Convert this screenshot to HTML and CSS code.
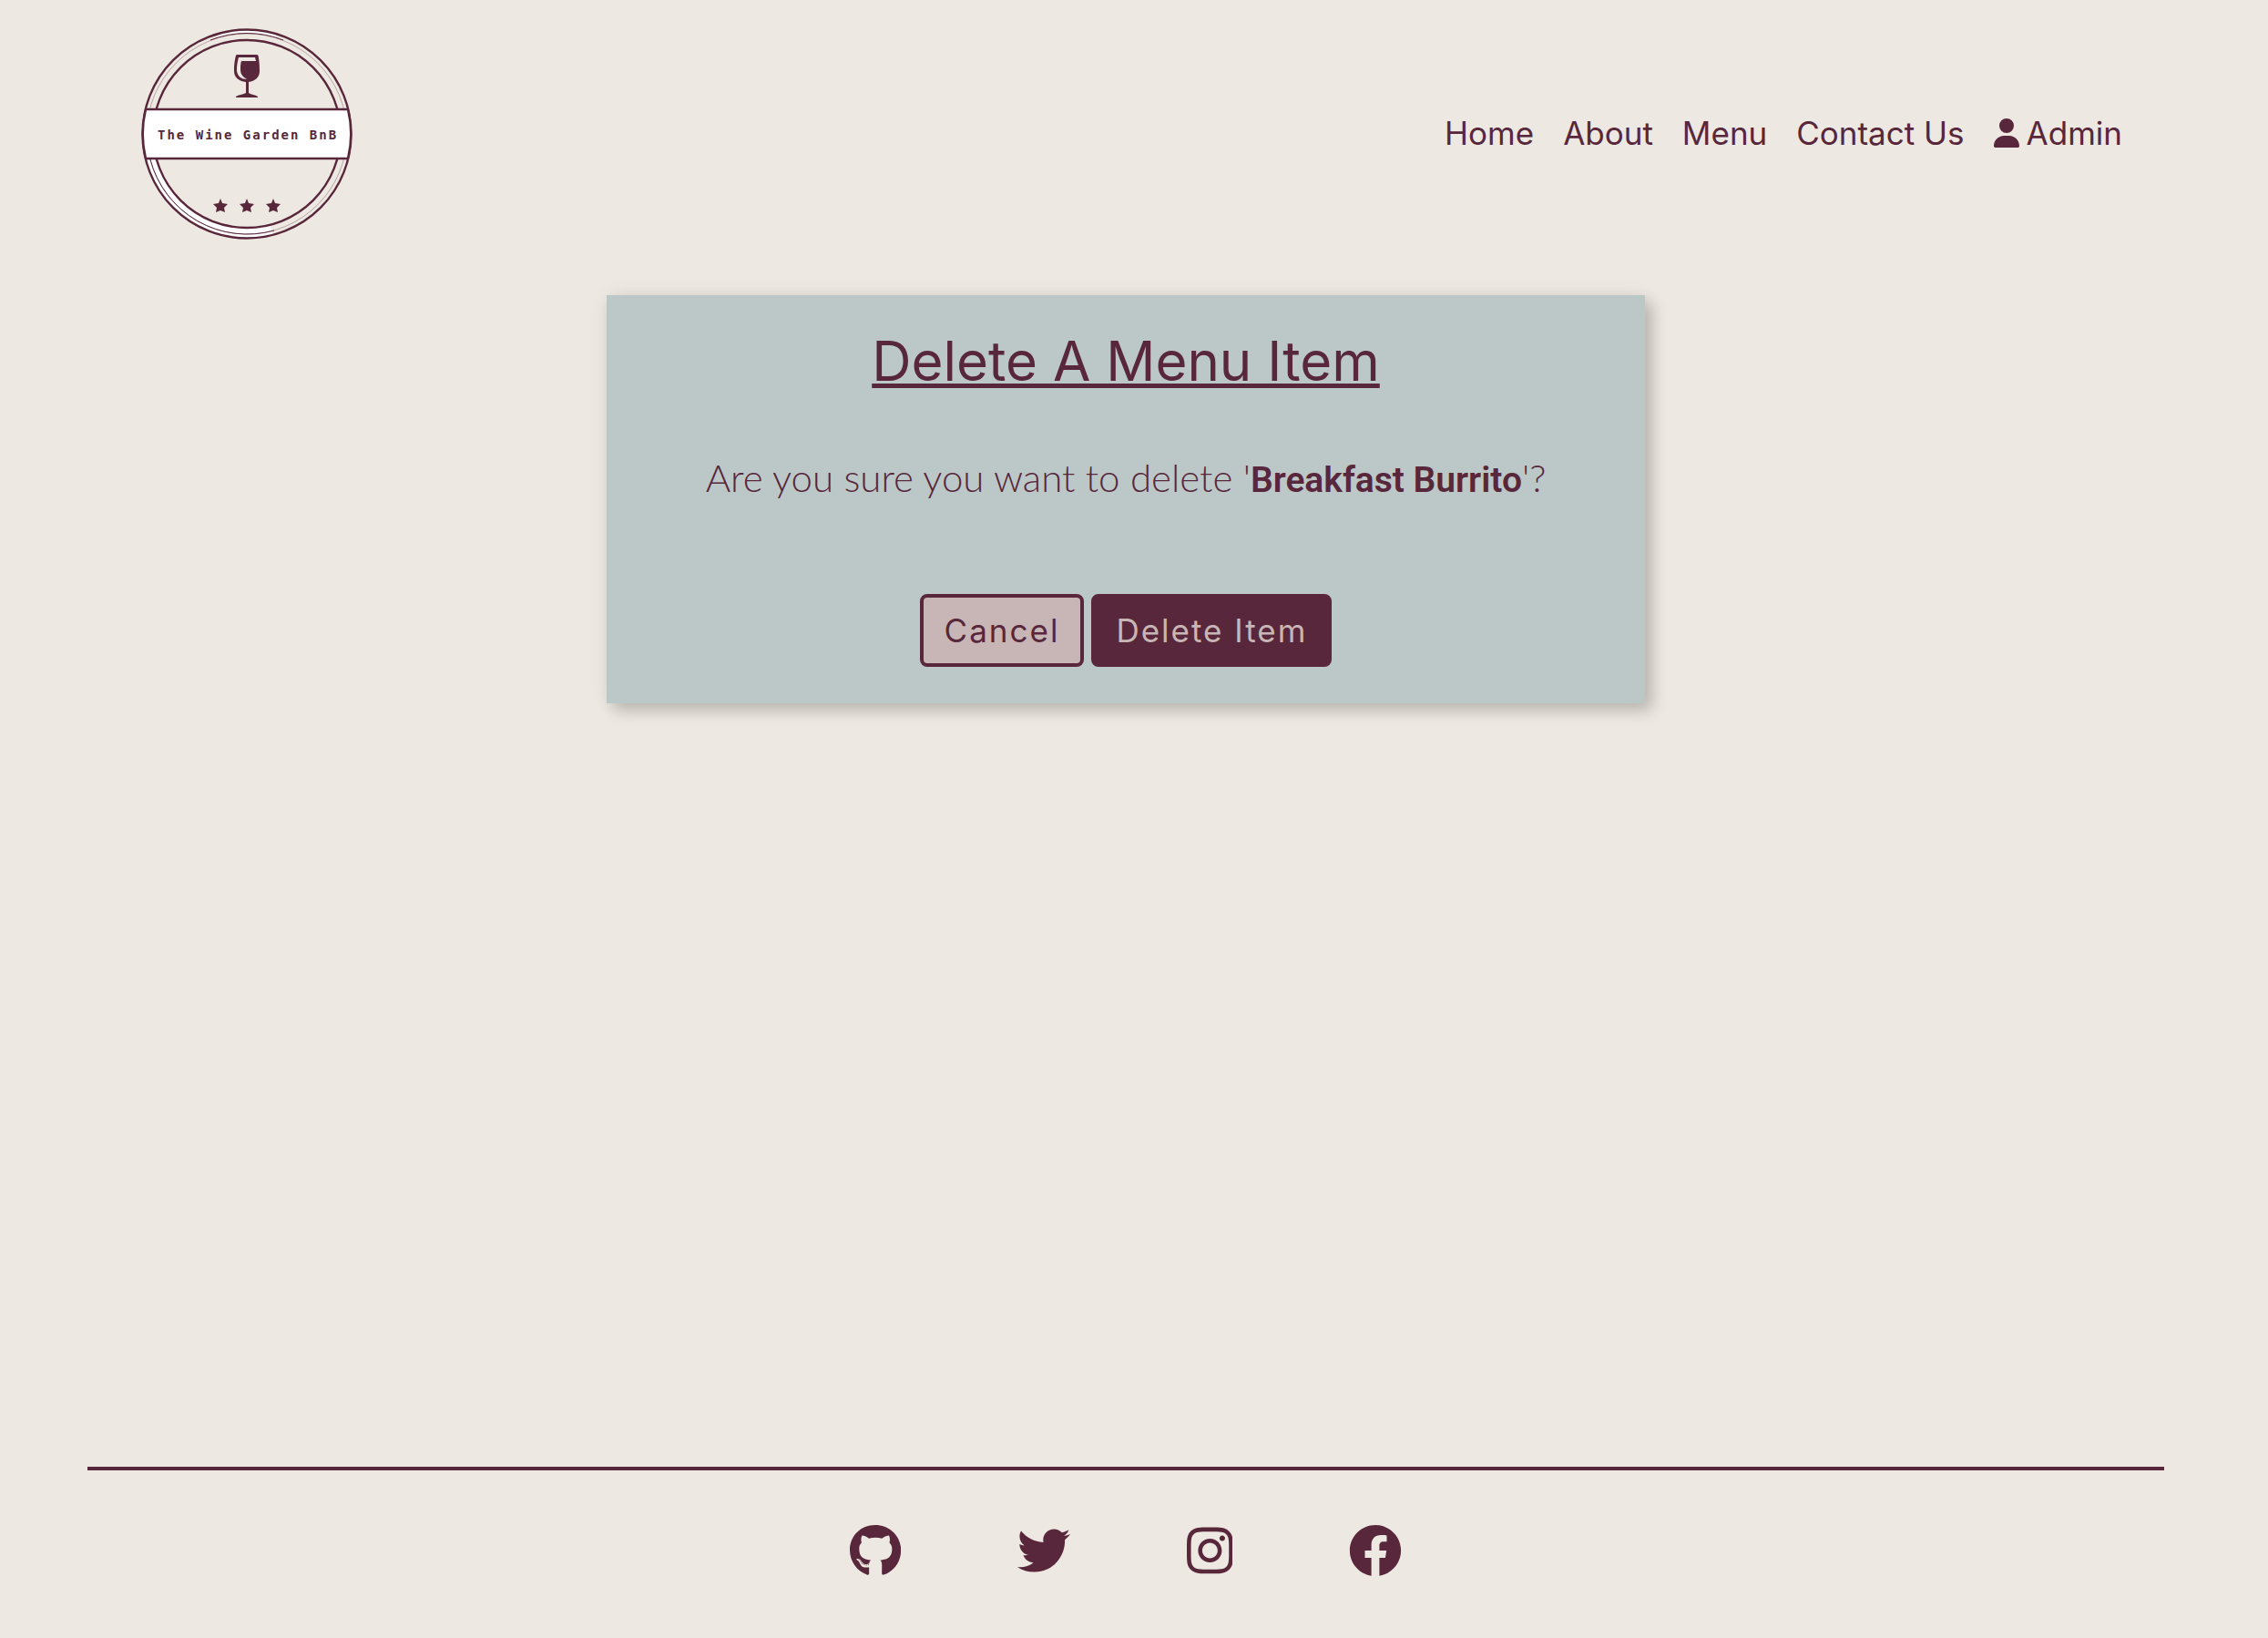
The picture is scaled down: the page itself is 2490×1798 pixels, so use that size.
FILE: index.html
```html
<!DOCTYPE html>
<html lang="en">
<head>
<meta charset="utf-8">
<meta name="viewport" content="width=device-width, initial-scale=1">
<title>The Wine Garden BnB</title>
<link rel="stylesheet" href="styles.css">
</head>
<body>
<header class="header">
  <a class="logo" href="#" aria-label="The Wine Garden BnB">
    <svg viewBox="0 0 232 232">
      <!-- pale highlights between the rings -->
      <path class="logo-shine" d="M84 8A112 112 0 0 1 148 8"/>
      <path class="logo-shine logo-shine-wide" d="M11 144A109 109 0 0 0 143 222"/>
      <circle class="ring" cx="116" cy="116" r="114.500"/>
      <circle class="ring" cx="116" cy="116" r="103"/>
      <circle class="ring ring-faint" cx="116" cy="116" r="110"/>
      <path class="ring ring-thin" d="M10 144A110 110 0 0 0 146 222"/>
      <path class="ring ring-thin" d="M76 13A110 110 0 0 1 156 13"/>
      <!-- name band -->
      <path class="band" d="M5 89H227A115 115 0 0 1 227 143H5A115 115 0 0 1 5 89Z"/>
      <text class="logo-name" x="18" y="122">The Wine Garden BnB</text>
      <!-- glass -->
      <path class="ink" fill-rule="evenodd" d="M105 29H127Q128 29 128.500 30C130 37 130 44 130 47C130 54 125 58 118 59V71C121 73 125 73 128 75V76H104V75C107 73 111 73 115 71V59C107 58 102 54 102 47C102 44 102 37 104 30Q104.500 29 105 29ZM107 32C105 39 105 44 105 47C106 53 110 56 116 56C111 53 109 50 109 45C109 42 109 39 110 36H126L125 32Z"/>
      <!-- stars -->
      <path id="star" class="ink" d="M87 187L89 192L95 193L91 197L92 202L87 200L82 202L83 197L79 193L85 192Z"/>
      <use href="#star" x="29"/>
      <use href="#star" x="58"/>
    </svg>
  </a>
  <nav class="nav">
    <a href="#">Home</a>
    <a href="#">About</a>
    <a href="#">Menu</a>
    <a href="#">Contact Us</a>
    <a class="nav-user" href="#"><svg viewBox="0 0 448 512"><path d="M224 256A128 128 0 1 0 224 0a128 128 0 1 0 0 256zm-45.700 48C79.800 304 0 383.800 0 482.300C0 498.700 13.300 512 29.700 512H418.300c16.400 0 29.700-13.300 29.700-29.700C448 383.800 368.200 304 269.700 304H178.300z"/></svg>Admin</a>
  </nav>
</header>
<main class="main">
  <form class="card">
    <h1>Delete A Menu Item</h1>
    <p>Are you sure you want to delete '<strong>Breakfast Burrito</strong>'?</p>
    <div class="actions">
      <button class="btn btn-cancel" type="button">Cancel</button>
      <button class="btn btn-delete" type="submit">Delete Item</button>
    </div>
  </form>
</main>
<footer class="footer">
  <a href="#" aria-label="GitHub"><svg viewBox="0 0 496 512"><path d="M165.900 397.400c0 2-2.300 3.600-5.200 3.600-3.300.3-5.600-1.300-5.600-3.600 0-2 2.300-3.600 5.200-3.600 3-.3 5.600 1.300 5.600 3.600zm-31.100-4.500c-.7 2 1.300 4.300 4.300 4.900 2.600 1 5.600 0 6.200-2s-1.300-4.300-4.300-5.200c-2.600-.7-5.500.3-6.200 2.300zm44.200-1.700c-2.900.7-4.900 2.600-4.600 4.900.3 2 2.900 3.300 5.900 2.600 2.900-.7 4.900-2.600 4.600-4.600-.3-1.900-3-3.200-5.900-2.900zM244.800 8C106.100 8 0 113.300 0 252c0 110.900 69.800 205.800 169.500 239.200 12.800 2.300 17.300-5.600 17.300-12.100 0-6.200-.3-40.400-.3-61.400 0 0-70 15-84.700-29.800 0 0-11.400-29.100-27.800-36.600 0 0-22.900-15.700 1.600-15.400 0 0 24.900 2 38.600 25.800 21.900 38.600 58.600 27.500 72.900 20.900 2.300-16 8.800-27.100 16-33.700-55.900-6.200-112.300-14.300-112.300-110.500 0-27.500 7.600-41.300 23.600-58.900-2.600-6.500-11.100-33.300 2.600-67.900 20.900-6.500 69 27 69 27 20-5.600 41.500-8.500 62.800-8.500s42.800 2.900 62.800 8.500c0 0 48.100-33.600 69-27 13.700 34.700 5.200 61.400 2.600 67.900 16 17.700 25.800 31.500 25.800 58.900 0 96.500-58.900 104.200-114.800 110.500 9.200 7.900 17 22.900 17 46.400 0 33.700-.3 75.400-.3 83.600 0 6.500 4.600 14.400 17.300 12.100C428.200 457.800 496 362.900 496 252 496 113.300 383.500 8 244.800 8zM97.200 352.900c-1.300 1-1 3.300.7 5.200 1.600 1.600 3.900 2.300 5.200 1 1.300-1 1-3.300-.7-5.200-1.600-1.600-3.900-2.300-5.200-1zm-10.800-8.100c-.7 1.300.3 2.900 2.300 3.900 1.600 1 3.600.7 4.300-.7.7-1.300-.3-2.900-2.300-3.900-2-.6-3.600-.3-4.300.7zm32.400 35.600c-1.600 1.300-1 4.300 1.300 6.200 2.300 2.300 5.200 2.600 6.500 1 1.300-1.300.7-4.300-1.300-6.200-2.200-2.300-5.200-2.600-6.500-1zm-11.400-14.700c-1.600 1-1.600 3.600 0 5.900 1.600 2.300 4.300 3.300 5.600 2.300 1.600-1.300 1.600-3.900 0-6.200-1.400-2.300-4-3.300-5.600-2z"/></svg></a>
  <a href="#" aria-label="Twitter"><svg viewBox="0 0 512 512"><path d="M459.370 151.716c.325 4.548.325 9.097.325 13.645 0 138.720-105.583 298.558-298.558 298.558-59.452 0-114.680-17.219-161.137-47.106 8.447.974 16.568 1.299 25.340 1.299 49.055 0 94.213-16.568 130.274-44.832-46.132-.975-84.792-31.188-98.112-72.772 6.498.974 12.995 1.624 19.818 1.624 9.421 0 18.843-1.300 27.614-3.573-48.081-9.747-84.143-51.980-84.143-102.985v-1.299c13.969 7.797 30.214 12.670 47.431 13.319-28.264-18.843-46.781-51.005-46.781-87.391 0-19.492 5.197-37.360 14.294-52.954 51.655 63.675 129.300 105.258 216.365 109.807-1.624-7.797-2.599-15.918-2.599-24.040 0-57.828 46.782-104.934 104.934-104.934 30.213 0 57.502 12.670 76.670 33.137 23.715-4.548 46.456-13.320 66.599-25.340-7.798 24.366-24.366 44.833-46.132 57.827 21.117-2.273 41.584-8.122 60.426-16.243-14.292 20.791-32.161 39.308-52.628 54.253z"/></svg></a>
  <a href="#" aria-label="Instagram"><svg viewBox="0 0 448 512"><path d="M224.100 141c-63.600 0-114.900 51.300-114.900 114.900s51.300 114.900 114.900 114.900S339 319.500 339 255.900 287.700 141 224.100 141zm0 189.600c-41.100 0-74.700-33.500-74.700-74.700s33.500-74.700 74.700-74.700 74.700 33.500 74.700 74.700-33.600 74.700-74.700 74.700zm146.400-194.300c0 14.900-12 26.800-26.800 26.800-14.900 0-26.800-12-26.800-26.800s12-26.800 26.800-26.800 26.800 12 26.800 26.800zm76.100 27.200c-1.700-35.900-9.900-67.700-36.200-93.900-26.200-26.200-58-34.400-93.900-36.200-37-2.100-147.900-2.100-184.900 0-35.800 1.700-67.600 9.900-93.900 36.100s-34.400 58-36.200 93.900c-2.100 37-2.100 147.900 0 184.900 1.700 35.900 9.900 67.700 36.200 93.900s58 34.400 93.900 36.200c37 2.100 147.900 2.100 184.900 0 35.900-1.700 67.700-9.900 93.900-36.200 26.200-26.200 34.400-58 36.200-93.900 2.100-37 2.100-147.800 0-184.800zM398.800 388c-7.800 19.600-22.900 34.700-42.600 42.600-29.500 11.700-99.500 9-132.100 9s-102.700 2.600-132.100-9c-19.600-7.800-34.700-22.900-42.600-42.600-11.700-29.500-9-99.500-9-132.100s-2.600-102.700 9-132.100c7.800-19.600 22.900-34.700 42.600-42.600 29.500-11.700 99.500-9 132.100-9s102.700-2.600 132.100 9c19.600 7.800 34.700 22.900 42.600 42.600 11.700 29.500 9 99.500 9 132.100s2.700 102.700-9 132.100z"/></svg></a>
  <a href="#" aria-label="Facebook"><svg viewBox="0 0 512 512"><path d="M504 256C504 119 393 8 256 8S8 119 8 256c0 123.780 90.690 226.380 209.250 245V327.690h-63V256h63v-54.640c0-62.150 37-96.480 93.670-96.480 27.140 0 55.520 4.840 55.520 4.840v61h-31.280c-30.800 0-40.410 19.120-40.410 38.730V256h68.780l-11 71.690h-57.780V501C413.310 479.380 504 379.780 504 256z"/></svg></a>
</footer>
</body>
</html>
```
FILE: styles.css
```css
* { box-sizing: border-box; }

:root {
  --wine: #58273b;
  --blush: #c7b6b5;
  --sage: #bcc8c7;
  --cream: #ede8e1;
}

body {
  margin: 0;
  padding: 0 114px 0 96px;
  min-height: 100vh;
  display: flex;
  flex-direction: column;
  background: var(--cream);
  color: var(--wine);
  font-family: Inter, "Open Sans", sans-serif;
}

svg { display: block; fill: currentColor; }
a { color: inherit; text-decoration: none; }

.header {
  display: flex;
  align-items: center;
  justify-content: space-between;
  padding: 31px 46px 0 59px;
}

.logo svg { width: 232px; height: 232px; overflow: visible; }
.logo-shine { fill: none; stroke: #fff; stroke-width: 5; }
.logo-shine-wide { stroke-width: 12; }
.ring { fill: none; stroke: var(--wine); stroke-width: 2.4; }
.ring-thin { stroke-width: 1; }
.ring-faint { stroke-width: 1; opacity: .35; }
.band { fill: #fff; stroke: var(--wine); stroke-width: 2.4; }
.logo-name { font: bold 14px "DejaVu Sans Mono", monospace; letter-spacing: 2px; }

.nav { display: flex; gap: 32px; padding-bottom: 2px; font-size: 35px; line-height: 40px; }
.nav-user { display: flex; align-items: center; gap: 8px; }
.nav-user svg { width: 28px; height: 32px; }

.main { flex: 1; padding-top: 61px; }

.card {
  width: 50%;
  margin: 0 auto;
  padding: 38px 40px 40px;
  background: var(--sage);
  box-shadow: 8px 8px 16px rgba(0, 0, 0, .2), 0 0 20px rgba(0, 0, 0, .06);
  text-align: center;
}

h1 {
  margin: 0;
  font-size: 60px;
  font-weight: 400;
  line-height: 68px;
  text-decoration: underline;
  text-decoration-thickness: 5px;
  text-underline-offset: 3px;
  text-decoration-skip-ink: none;
}

p {
  margin: 68px 0 102px;
  font-family: Lato, sans-serif;
  font-size: 42px;
  font-weight: 300;
  line-height: 52px;
}

strong { font-family: Roboto, sans-serif; font-size: 39px; font-weight: 600; line-height: 1; }

.actions { display: flex; justify-content: center; gap: 8px; }

.btn {
  height: 80px;
  padding: 0 23px;
  border: 4px solid var(--wine);
  border-radius: 8px;
  font: 400 35px Inter, sans-serif;
  letter-spacing: 2px;
}
.btn-cancel { background: var(--blush); color: var(--wine); }
.btn-delete { background: var(--wine); color: var(--blush); }

.footer {
  display: flex;
  justify-content: center;
  gap: 128px;
  padding: 59px 0 67px;
  border-top: 4px solid var(--wine);
}
.footer svg { height: 58px; }
```
